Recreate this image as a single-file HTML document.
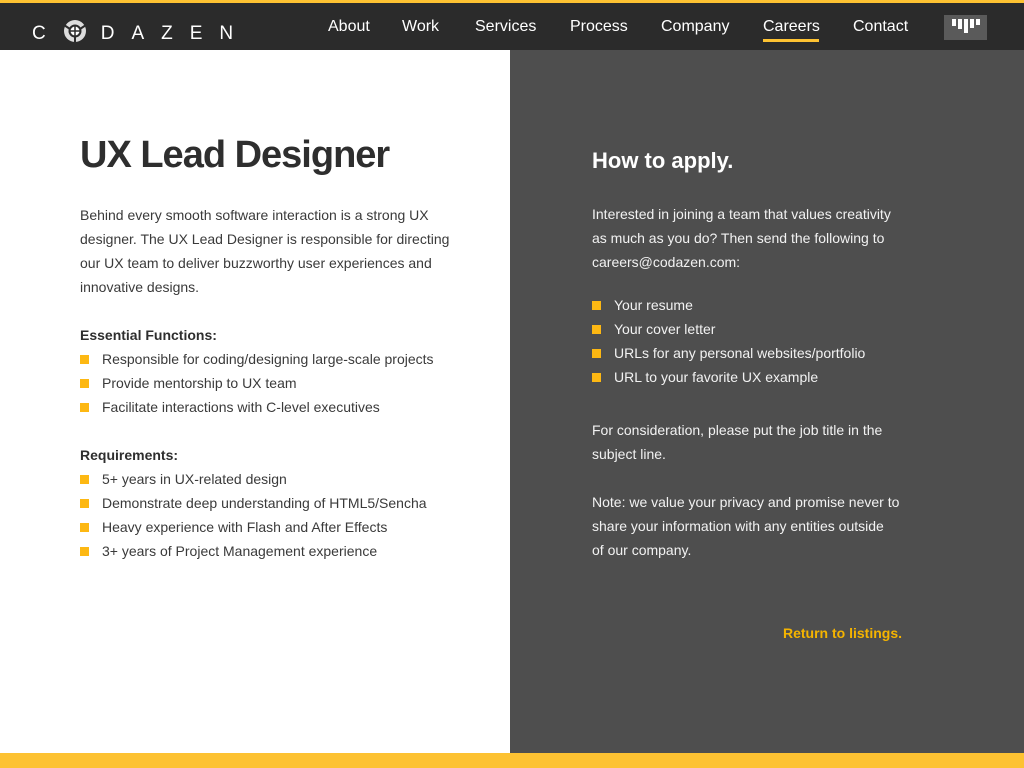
<!DOCTYPE html>
<html><head><meta charset="utf-8"><style>
*{margin:0;padding:0;box-sizing:border-box}
body{width:1024px;height:768px;overflow:hidden;font-family:"Liberation Sans",sans-serif;background:#fff;position:relative}
.top{position:absolute;left:0;top:0;width:1024px;height:3px;background:#fdc232}
.hdr{position:absolute;left:0;top:3px;width:1024px;height:47px;background:#2b2b2b}
.logo{position:absolute;left:32px;top:19px;color:#fff;font-size:19px;letter-spacing:17px;font-weight:normal}
.nav{position:absolute;top:18px;color:#fff;font-size:16px}
.ul{position:absolute;left:763px;top:39px;width:56px;height:3px;background:#fdc232}
.ic{position:absolute;left:944px;top:15px;width:43px;height:25px;background:#5a5a5a}
.ic i{position:absolute;background:#fff;width:4px}
.right{position:absolute;left:510px;top:50px;width:514px;height:703px;background:#4e4e4e}
.bot{position:absolute;left:0;top:753px;width:1024px;height:15px;background:#fdc232}
h1{position:absolute;left:80px;top:134px;font-size:38px;color:#2e2e2e;font-weight:bold;letter-spacing:-1px}
.p{position:absolute;font-size:14px;line-height:24px;color:#3a3a3a;white-space:nowrap}
.b{font-weight:bold;color:#2e2e2e}
ul{list-style:none}
li{position:relative;padding-left:22px}
li:before{content:"";position:absolute;left:0;top:8px;width:9px;height:9px;background:#fdb813}
.w{color:#f2f2f2}
h2{position:absolute;left:592px;top:148px;font-size:22px;color:#fff;font-weight:bold}
.ret{position:absolute;left:783px;top:625px;color:#f5b400;font-weight:bold;font-size:14px}
</style></head><body>
<div class="top"></div><div class="hdr"></div>
<div class="logo">C<svg width="24" height="24" viewBox="0 0 24 24" style="vertical-align:-4px;margin-right:14px"><circle cx="12" cy="12" r="11" fill="#ddd"/><circle cx="12" cy="12" r="6.5" fill="#2b2b2b"/><circle cx="12" cy="12" r="4.5" fill="#fff"/><path d="M12 7v10M7 12h10" stroke="#2b2b2b" stroke-width="1.5"/><path d="M1 6l6 4M23 6l-6 4M12 23v-6" stroke="#2b2b2b" stroke-width="2"/></svg>DAZEN</div>
<div class="nav" style="left:328px">About</div>
<div class="nav" style="left:402px">Work</div>
<div class="nav" style="left:475px">Services</div>
<div class="nav" style="left:570px">Process</div>
<div class="nav" style="left:661px">Company</div>
<div class="nav" style="left:763px">Careers</div>
<div class="nav" style="left:853px">Contact</div>
<div class="ul"></div>
<div class="ic"><i style="left:8px;top:4px;height:7px"></i><i style="left:14px;top:4px;height:10px"></i><i style="left:20px;top:4px;height:14px"></i><i style="left:26px;top:4px;height:9px"></i><i style="left:32px;top:4px;height:6px"></i></div>
<div class="right"></div>
<h1>UX Lead Designer</h1>
<div class="p" style="left:80px;top:203px">Behind every smooth software interaction is a strong UX<br>designer. The UX Lead Designer is responsible for directing<br>our UX team to deliver buzzworthy user experiences and<br>innovative designs.</div>
<div class="p" style="left:80px;top:323px"><div class="b">Essential Functions:</div><ul><li>Responsible for coding/designing large-scale projects</li><li>Provide mentorship to UX team</li><li>Facilitate interactions with C-level executives</li></ul></div>
<div class="p" style="left:80px;top:443px"><div class="b">Requirements:</div><ul><li>5+ years in UX-related design</li><li>Demonstrate deep understanding of HTML5/Sencha</li><li>Heavy experience with Flash and After Effects</li><li>3+ years of Project Management experience</li></ul></div>
<h2>How to apply.</h2>
<div class="p w" style="left:592px;top:202px">Interested in joining a team that values creativity<br>as much as you do? Then send the following to<br>careers@codazen.com:</div>
<div class="p w" style="left:592px;top:293px"><ul><li>Your resume</li><li>Your cover letter</li><li>URLs for any personal websites/portfolio</li><li>URL to your favorite UX example</li></ul></div>
<div class="p w" style="left:592px;top:418px">For consideration, please put the job title in the<br>subject line.</div>
<div class="p w" style="left:592px;top:490px">Note: we value your privacy and promise never to<br>share your information with any entities outside<br>of our company.</div>
<div class="ret">Return to listings.</div>
<div class="bot"></div>
</body></html>
